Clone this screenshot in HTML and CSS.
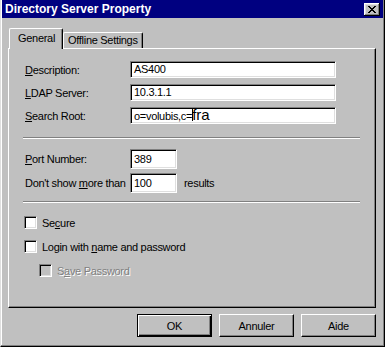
FILE: index.html
```html
<!DOCTYPE html>
<html lang="en">
<head>
  <meta charset="UTF-8" />
  <title>Directory Server Property</title>
  <link rel="stylesheet" href="styles.css">
</head>
<body>
  <div class="window">
    <div class="title-bar">
      <span>Directory Server Property</span>
      <div class="close-btn">
        <svg width="8" height="7" viewBox="0 0 8 7">
          <path d="M0 0h2v1h1v1h2v-1h1v-1h2v1h-1v1h-1v1h-1v1h1v1h1v1h1v1h-2v-1h-1v-1h-2v1h-1v1h-2v-1h1v-1h1v-1h1v-1h-1v-1h-1v-1h-1z" fill="#000"/>
        </svg>
      </div>
    </div>

    <div class="tabs">
      <div class="tab active">General</div>
      <div class="tab">Offline Settings</div>
    </div>

    <div class="panel">
      <div class="form-grid">
        <label class="label"><u>D</u>escription:</label>
        <div class="field wide">AS400</div>
        <label class="label"><u>L</u>DAP Server:</label>
        <div class="field wide">10.3.1.1</div>
        <label class="label"><u>S</u>earch Root:</label>
        <div class="field wide">o=volubis,c=<span class="big">f<i class="caret"></i>ra</span></div>
      </div>

      <div class="separator"></div>

      <div class="form-grid port">
        <label class="label"><u>P</u>ort Number:</label>
        <div class="field short">389</div>
        <span></span>
        <label class="label">Don't show <u>m</u>ore than</label>
        <div class="field short">100</div>
        <span class="suffix">results</span>
      </div>

      <div class="separator"></div>

      <div class="checks">
        <div class="check"><span class="box"></span><span>Se<u>c</u>ure</span></div>
        <div class="check"><span class="box"></span><span>Login with <u>n</u>ame and password</span></div>
        <div class="check sub disabled"><span class="box"></span><span>S<u>a</u>ve Password</span></div>
      </div>
    </div>

    <div class="buttons">
      <div class="btn default"><span>OK</span></div>
      <div class="btn"><span>Annuler</span></div>
      <div class="btn"><span>Aide</span></div>
    </div>
  </div>
</body>
</html>
```

FILE: styles.css
```css
body {
  margin: 0;
  background: #c0c0c0;
  font-family: 'Liberation Sans', Arial, sans-serif;
  font-size: 11px;
  letter-spacing: -0.3px;
  color: #000;
}

.window {
  width: 385px;
  height: 347px;
  box-sizing: border-box;
  background: #c0c0c0;
  border-left: 1px solid #dfdfdf;
  border-right: 1px solid #000;
  border-bottom: 1px solid #000;
  box-shadow: inset -1px -1px #808080, inset 1px 0 #fff;
  display: flex;
  flex-direction: column;
}

.title-bar {
  height: 18px;
  margin: 0 1px 0 1px;
  padding: 0 3px 0 3px;
  background: #000080;
  color: #fff;
  font-weight: bold;
  font-size: 12px;
  letter-spacing: 0;
  display: flex;
  align-items: center;
  justify-content: space-between;
}

.close-btn {
  width: 16px;
  height: 13px;
  box-sizing: border-box;
  background: #c0c0c0;
  box-shadow: inset -1px -1px #000, inset 1px 1px #fff, inset -2px -2px #808080, inset 2px 2px #dfdfdf;
  display: flex;
  align-items: center;
  justify-content: center;
}

/* onglets */
.tabs {
  display: flex;
  align-items: flex-end;
  margin: 10px 0 0 8px;
  height: 20px;
  position: relative;
  z-index: 1;
}

.tab {
  height: 16px;
  box-sizing: border-box;
  padding: 0 4px;
  border-top: 1px solid #fff;
  border-left: 1px solid #fff;
  border-right: 1px solid #000;
  border-radius: 2px 2px 0 0;
  box-shadow: inset -1px 0 #808080;
  line-height: 15px;
}

.tab.active {
  height: 21px;
  margin-bottom: -1px;
  padding: 0 7px 0 8px;
  background: #c0c0c0;
  line-height: 18px;
}

.panel {
  margin-left: 7px;
  width: 368px;
  height: 260px;
  box-sizing: border-box;
  border-top: 1px solid #fff;
  border-left: 1px solid #fff;
  border-right: 1px solid #000;
  border-bottom: 1px solid #000;
  box-shadow: inset -1px -1px #808080;
  padding: 12px 15px 0 14px;
}

.form-grid {
  display: grid;
  grid-template-columns: 107px 206px;
  row-gap: 6px;
  align-items: center;
}

.form-grid.port {
  grid-template-columns: 107px 47px auto;
  row-gap: 4px;
  margin-top: 10px;
}

.label {
  padding-left: 2px;
  white-space: nowrap;
}

.field {
  height: 17px;
  box-sizing: border-box;
  background: #fff;
  border-top: 1px solid #808080;
  border-left: 1px solid #808080;
  border-right: 1px solid #fff;
  border-bottom: 1px solid #fff;
  box-shadow: inset 1px 1px #000, inset -1px -1px #dfdfdf;
  padding: 0 3px;
  line-height: 15px;
  white-space: nowrap;
  overflow: hidden;
}

.field.short {
  height: 20px;
  line-height: 18px;
}

.big {
  font-size: 15px;
  line-height: 13px;
  letter-spacing: 0;
}

.caret {
  display: inline-block;
  width: 1px;
  height: 13px;
  background: #000;
  margin-left: -4px;
  margin-right: 3px;
  vertical-align: -1px;
}

.suffix {
  padding-left: 7px;
}

.separator {
  height: 0;
  border-top: 1px solid #808080;
  border-bottom: 1px solid #fff;
  margin-top: 13px;
}

.form-grid.port + .separator {
  margin-top: 8px;
}

.checks {
  display: flex;
  flex-direction: column;
  gap: 11px;
  margin-top: 13px;
  padding-left: 1px;
}

.check {
  display: flex;
  align-items: center;
  gap: 5px;
  height: 13px;
}

.check .box {
  width: 13px;
  height: 13px;
  box-sizing: border-box;
  background: #fff;
  border-top: 1px solid #808080;
  border-left: 1px solid #808080;
  border-right: 1px solid #fff;
  border-bottom: 1px solid #fff;
  box-shadow: inset 1px 1px #000, inset -1px -1px #dfdfdf;
}

.check.sub {
  padding-left: 15px;
}

.check.disabled {
  color: #808080;
  text-shadow: 1px 1px #fff;
}

.check.disabled .box {
  background: #c0c0c0;
}

.buttons {
  display: flex;
  justify-content: flex-end;
  gap: 7px;
  margin-top: 6px;
  padding-right: 8px;
}

.btn {
  width: 75px;
  height: 23px;
  box-sizing: border-box;
  background: #c0c0c0;
  border-top: 1px solid #fff;
  border-left: 1px solid #fff;
  border-right: 1px solid #000;
  border-bottom: 1px solid #000;
  box-shadow: inset -1px -1px #808080;
  display: flex;
  align-items: center;
  justify-content: center;
}

.btn.default {
  border: 1px solid #000;
  box-shadow: inset 1px 1px #fff, inset -1px -1px #000, inset -2px -2px #808080;
}
```
